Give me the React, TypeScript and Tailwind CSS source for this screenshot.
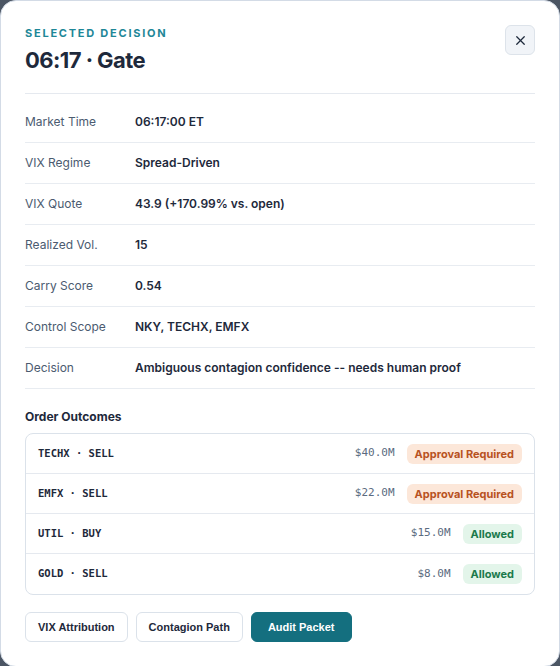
import { X } from "lucide-react";

const details = [
  { label: "Market Time", value: "06:17:00 ET" },
  { label: "VIX Regime", value: "Spread-Driven" },
  { label: "VIX Quote", value: "43.9 (+170.99% vs. open)" },
  { label: "Realized Vol.", value: "15" },
  { label: "Carry Score", value: "0.54" },
  { label: "Control Scope", value: "NKY, TECHX, EMFX" },
  { label: "Decision", value: "Ambiguous contagion confidence -- needs human proof" },
];

const orders = [
  { name: "TECHX · SELL", amount: "$40.0M", status: "Approval Required" },
  { name: "EMFX · SELL", amount: "$22.0M", status: "Approval Required" },
  { name: "UTIL · BUY", amount: "$15.0M", status: "Allowed" },
  { name: "GOLD · SELL", amount: "$8.0M", status: "Allowed" },
];

export default function App() {
  return (
    <div className="min-h-screen bg-[#4b5563] font-['Inter',sans-serif]">
      <div className="w-[560px] rounded-2xl border border-[#d3dbe6] bg-white px-6 pt-6 pb-6">
        <div className="flex items-start justify-between border-b border-[#e5e9ef] pb-[19px]">
          <div>
            <div className="text-[11px] font-bold leading-4 tracking-[0.16em] text-[#1e8797]">
              SELECTED DECISION
            </div>
            <h2 className="mt-[5px] text-[22px] font-bold leading-7 tracking-tight text-[#1e293b]">
              06:17 · Gate
            </h2>
          </div>
          <button className="flex h-[30px] w-[30px] items-center justify-center rounded-md border border-[#dde3ea] bg-[#f1f4f8] text-[#1e293b]">
            <X size={15} strokeWidth={2} />
          </button>
        </div>

        <div className="mt-2">
          {details.map((d) => (
            <div
              key={d.label}
              className="flex border-b border-[#e8ecf1] py-3 text-[12px] leading-4"
            >
              <div className="w-[110px] shrink-0 text-[#4b5b70]">{d.label}</div>
              <div className="font-semibold text-[#1e293b]">{d.value}</div>
            </div>
          ))}
        </div>

        <div className="mt-5 text-[12px] font-bold leading-4 text-[#1e293b]">
          Order Outcomes
        </div>
        <div className="mt-2 rounded-lg border border-[#dbe2ea]">
          {orders.map((o, i) => (
            <div
              key={o.name}
              className={`flex h-10 items-center px-3 ${
                i < orders.length - 1 ? "border-b border-[#e5e9ef]" : ""
              }`}
            >
              <div className="font-['DejaVu_Sans_Mono',monospace] text-[10.5px] font-bold text-[#1e293b]">
                {o.name}
              </div>
              <div className="ml-auto font-['DejaVu_Sans_Mono',monospace] text-[11px] text-[#5b6b80]">
                {o.amount}
              </div>
              {o.status === "Allowed" ? (
                <span className="ml-3 rounded-md bg-[#e3f5ea] px-2 py-[3px] text-[11px] font-bold leading-[14px] text-[#1b7a4c]">
                  {o.status}
                </span>
              ) : (
                <span className="ml-3 rounded-md bg-[#fce7d9] px-2 py-[3px] text-[11px] font-bold leading-[14px] text-[#b8521f]">
                  {o.status}
                </span>
              )}
            </div>
          ))}
        </div>

        <div className="mt-[17px] flex gap-2 font-['Liberation_Sans',Arial,sans-serif]">
          <button className="h-[30px] rounded-md border border-[#dbe2ea] bg-white px-3 text-[11px] font-bold text-[#1e293b]">
            VIX Attribution
          </button>
          <button className="h-[30px] rounded-md border border-[#dbe2ea] bg-white px-3 text-[11px] font-bold text-[#1e293b]">
            Contagion Path
          </button>
          <button className="h-[30px] rounded-md border border-[#146f7f] bg-[#146f7f] px-4 text-[11px] font-bold text-white">
            Audit Packet
          </button>
        </div>
      </div>
    </div>
  );
}
